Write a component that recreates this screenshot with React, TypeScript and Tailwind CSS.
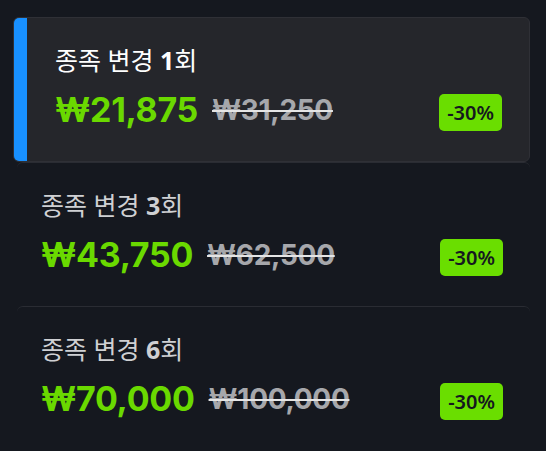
const plans = [
  { count: 1, price: '₩21,875', original: '₩31,250', selected: true },
  { count: 3, price: '₩43,750', original: '₩62,500', selected: false },
  { count: 6, price: '₩70,000', original: '₩100,000', selected: false },
];

function PriceRow({ price, original }: { price: string; original: string }) {
  return (
    <div className="mt-[10px] flex items-center font-['Inter','Noto_Sans',sans-serif]">
      <span className="text-[34px] leading-[46px] font-bold tracking-[-0.3px] text-[#6ad900]">{price}</span>
      <span className="ml-[14px] text-[28px] leading-[40px] font-bold tracking-[-0.3px] text-[#a6a7ab] line-through decoration-[#e5e5e5] decoration-[2px]">
        {original}
      </span>
      <span className="ml-auto mt-[4px] rounded-[5px] bg-[#6ade00] px-[8px] py-[5px] font-['Noto_Sans',sans-serif] text-[20px] leading-[27px] font-semibold text-[#15181f]">
        -30%
      </span>
    </div>
  );
}

export default function App() {
  return (
    <main
      className="min-h-screen w-[546px] h-[451px] overflow-hidden bg-[#15181f] pt-[17px] pl-[13px] pr-[16px]"
      style={{ fontFamily: '"Noto Sans", "Noto Sans CJK KR", sans-serif' }}
    >
      <div className="flex flex-col">
        {plans.map((p) =>
          p.selected ? (
            <div
              key={p.count}
              className="flex h-[145px] rounded-md bg-[#25262b] border border-[#2f3036] overflow-hidden"
            >
              <div className="w-[13px] shrink-0 bg-[#1890ff]" />
              <div className="flex-1 pl-[28px] pr-[27px] pt-[25px]">
                <div className="text-[25px] leading-[34px] text-white">
                  종족 변경 <span className="font-bold">{p.count}</span>회
                </div>
                <PriceRow price={p.price} original={p.original} />
              </div>
            </div>
          ) : (
            <div
              key={p.count}
              className="h-[144px] ml-[4px] rounded-t-md border-t border-[#2a2c33] pl-[24px] pr-[27px] pt-[25px]"
            >
              <div className="text-[25px] leading-[34px] text-[#cfd0d3]">
                종족 변경 <span className="font-bold">{p.count}</span>회
              </div>
              <PriceRow price={p.price} original={p.original} />
            </div>
          )
        )}
      </div>
    </main>
  );
}
